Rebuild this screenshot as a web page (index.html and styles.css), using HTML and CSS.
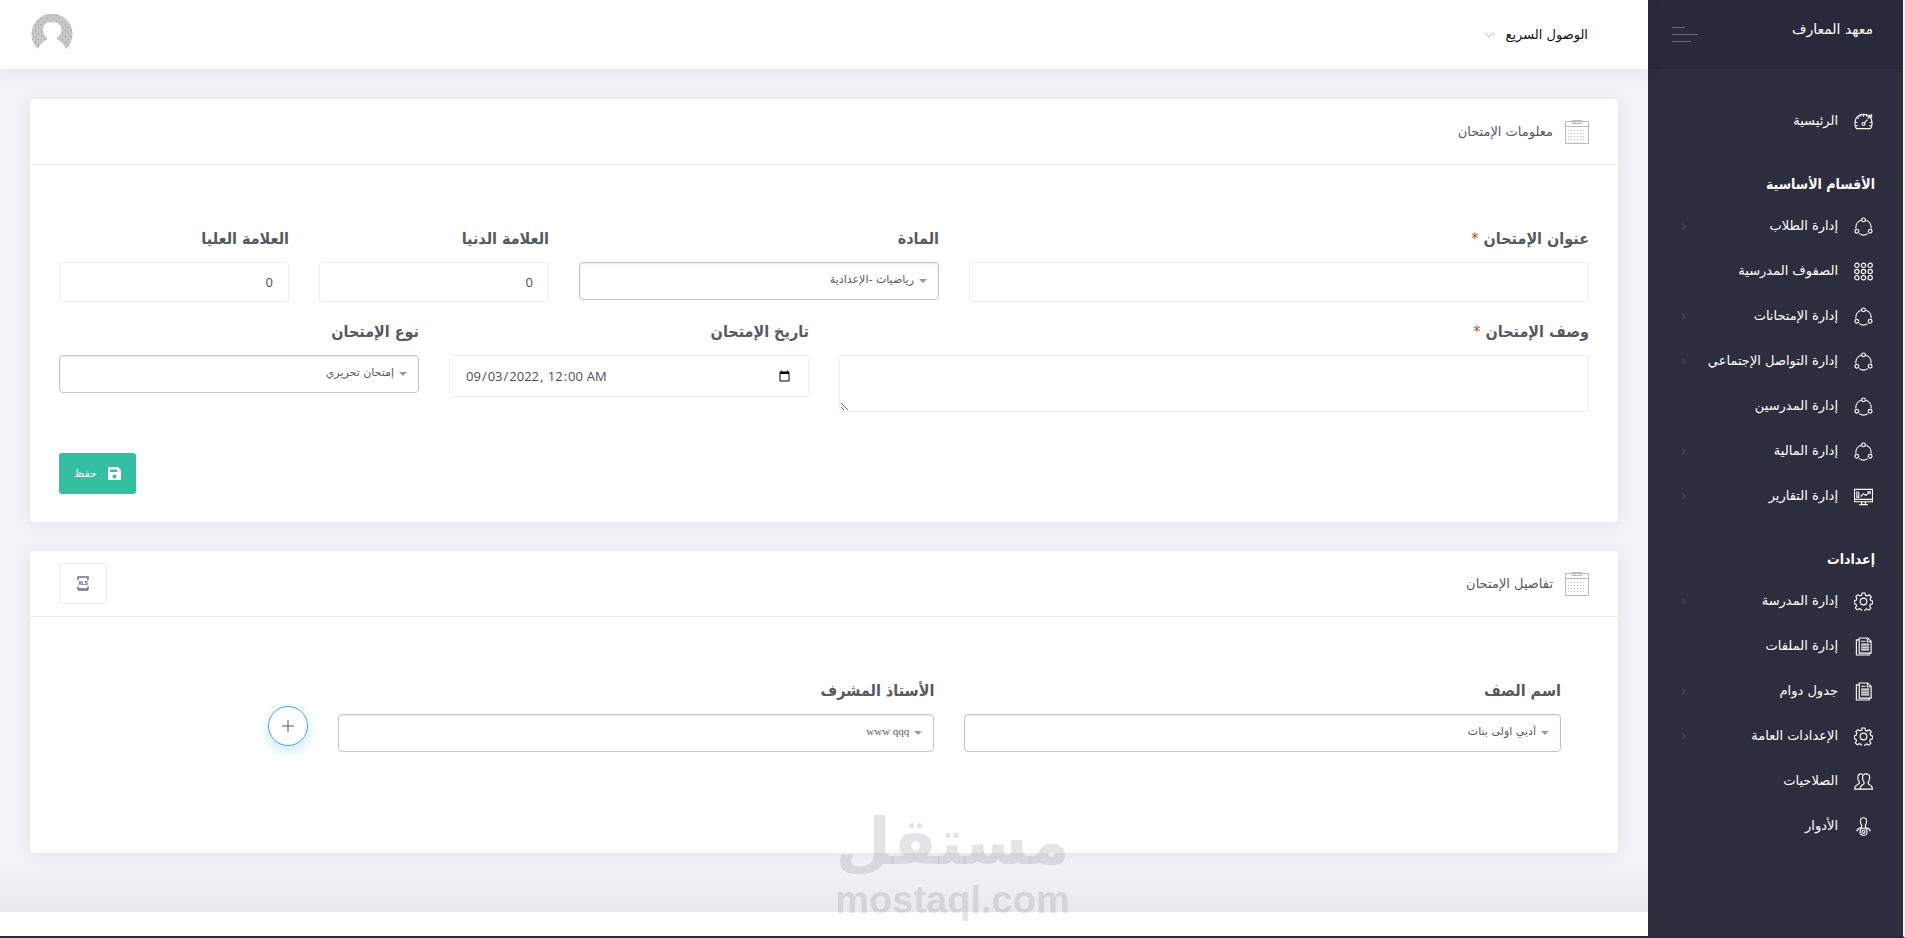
FILE: index.html
```
<!DOCTYPE html>
<html lang="ar" dir="rtl">
	<head>
		<meta charset="utf-8">
		<meta name="viewport" content="width=device-width, initial-scale=1.0">
		<title>معهد المعارف</title>
		<link rel="stylesheet" href="styles.css">
	</head>
	<body>
		<!-- 图标 -->
		<svg class="sprite" aria-hidden="true">
			<symbol id="i-dashboard" viewBox="0 0 20 20">
				<path d="M3 17.500h14c1-.5 2-3 2-6.500C19 6 15 2.500 10 2.500S1 6 1 11c0 3.500 1 6 2 6.500zM10 2.500v2.500M1 11h2.500M19 11h-2.500M3.500 5.500l1.500 1.500M6 3.500l.8 1.500M14 3.500l-.8 1.500M2 14.500h2M18 14.500h-2M14.500 7l4.500-4.500M15.500 3.500h3M18.500 3v3"/>
				<circle cx="10" cy="12.500" r="1.500"/><path d="M11 11.500l3-3.500"/>
			</symbol>
			<symbol id="i-share" viewBox="0 0 20 20">
				<circle cx="10" cy="3" r="2"/><circle cx="3" cy="15" r="2"/><circle cx="17" cy="15" r="2"/>
				<path d="M7.500 3.500A8 8 0 0 0 2 12M12.500 3.500A8 8 0 0 1 18 12M5.500 17.500a8 8 0 0 0 9 0"/>
			</symbol>
			<symbol id="i-grid" viewBox="0 0 20 20">
				<circle cx="3" cy="3.500" r="2.300"/><circle cx="10" cy="3.500" r="2.300"/><circle cx="17" cy="3.500" r="2.300"/>
				<circle cx="3" cy="10" r="2.300"/><circle cx="10" cy="10" r="2.300"/><circle cx="17" cy="10" r="2.300"/>
				<circle cx="3" cy="16.500" r="2.300"/><circle cx="10" cy="16.500" r="2.300"/><circle cx="17" cy="16.500" r="2.300"/>
			</symbol>
			<symbol id="i-report" viewBox="0 0 20 20">
				<path d="M.5 2.500h19v13H.5zM.5 13h19M8 15.500v3M12 15.500v3M5.500 18.500h9M3 4.500v6.500h2v-6M7 10l3-3 2.500 2 4-4M14 5h3v2.500"/>
			</symbol>
			<symbol id="i-gear" viewBox="0 0 20 20">
				<circle cx="10" cy="10" r="3.500"/>
				<path d="M8.500 1h3l.6 2.400 1.800.8 2.200-1.300 2.100 2.100-1.300 2.200.8 1.800 2 .6v2.800l-2.400.6-.8 1.800 1.300 2.200-2.100 2.100-2.200-1.300-1.800.8-.6 1.900h-3l-.6-2.200-1.800-.8-2.200 1.300-2.100-2.100 1.300-2.200-.8-1.800-1.600-.3V9.300l1.900-.6.8-1.800L2 4.800l2.100-2 2.200 1.300 1.800-.8z"/>
			</symbol>
			<symbol id="i-file" viewBox="0 0 20 20">
				<path d="M5.500 1h9l3.500 3.500V17H5.500zM14 1v4h4M5.500 3h-3v16H16v-2M7.500 7.500H16M7.500 9.500H16M7.500 11.500H16M7.500 13.500H16M7.500 4.500H12"/>
			</symbol>
			<symbol id="i-users" viewBox="0 0 20 20">
				<path d="M12.500 2c-2.500 0-3.500 1.500-3.500 4 0 2 .7 3.500 1.500 4.500v2c-1.500 1-4 1.500-4 5.500h13c0-4-3-4.500-4.500-5.500v-2c1-1 1.500-2.500 1.500-4.500 0-2.500-1.200-4-4-4z"/>
				<path d="M9 2.500C8.500 2.100 8 2 7.500 2 5 2 4 3.500 4 6c0 2 .5 3 1.500 4v2C4 13.500.5 13.500.5 18h6"/>
			</symbol>
			<symbol id="i-role" viewBox="0 0 20 20">
				<path d="M10 .8C7.500.8 6.800 2.200 6.800 4.500c0 1.800.4 3 1.200 4v2.500c-2 .8-5 1-5 4M10 .8c2.500 0 3.200 1.400 3.200 3.700 0 1.800-.4 3-1.200 4v2.500c2 .8 5 1 5 4"/>
				<circle cx="10" cy="15.500" r="3.700"/><circle cx="10" cy="15.500" r="1.500"/>
			</symbol>
			<symbol id="i-calendar" viewBox="0 0 24 24">
				<path d="M.5 1.500h23v22H.5zM.5 6.500h23"/>
				<path d="M7 .5h10v3H7zM10 .5v3M14 .5v3"/>
				<path d="M3 10.500h18M3 13.500h18M3 16.500h18M3 19.500h18" stroke-dasharray="1 2"/>
			</symbol>
		</svg>
		<div id="page">
			<aside class="sidebar">
				<div class="brand">
					<a class="brand__name" href="#">معهد المعارف</a>
					<button class="brand__toggle" type="button" aria-label="القائمة"><span></span><span></span><span></span></button>
				</div>
				<nav class="menu">
					<a class="menu__item" href="#"><svg class="icon"><use href="#i-dashboard"/></svg><span>الرئيسية</span></a>
					<h4 class="menu__section">الأقسام الأساسية</h4>
					<a class="menu__item menu__item--sub" href="#"><svg class="icon"><use href="#i-share"/></svg><span>إدارة الطلاب</span></a>
					<a class="menu__item" href="#"><svg class="icon"><use href="#i-grid"/></svg><span>الصفوف المدرسية</span></a>
					<a class="menu__item menu__item--sub" href="#"><svg class="icon"><use href="#i-share"/></svg><span>إدارة الإمتحانات</span></a>
					<a class="menu__item menu__item--sub" href="#"><svg class="icon"><use href="#i-share"/></svg><span>إدارة التواصل الإجتماعي</span></a>
					<a class="menu__item" href="#"><svg class="icon"><use href="#i-share"/></svg><span>إدارة المدرسين</span></a>
					<a class="menu__item menu__item--sub" href="#"><svg class="icon"><use href="#i-share"/></svg><span>إدارة المالية</span></a>
					<a class="menu__item menu__item--sub" href="#"><svg class="icon"><use href="#i-report"/></svg><span>إدارة التقارير</span></a>
					<h4 class="menu__section">إعدادات</h4>
					<a class="menu__item menu__item--sub" href="#"><svg class="icon"><use href="#i-gear"/></svg><span>إدارة المدرسة</span></a>
					<a class="menu__item" href="#"><svg class="icon"><use href="#i-file"/></svg><span>إدارة الملفات</span></a>
					<a class="menu__item menu__item--sub" href="#"><svg class="icon"><use href="#i-file"/></svg><span>جدول دوام</span></a>
					<a class="menu__item menu__item--sub" href="#"><svg class="icon"><use href="#i-gear"/></svg><span>الإعدادات العامة</span></a>
					<a class="menu__item" href="#"><svg class="icon"><use href="#i-users"/></svg><span>الصلاحيات</span></a>
					<a class="menu__item" href="#"><svg class="icon"><use href="#i-role"/></svg><span>الأدوار</span></a>
				</nav>
			</aside>
			<div class="wrapper">
				<header class="header">
					<a class="header__link" href="#">الوصول السريع
						<svg width="10" height="6" viewBox="0 0 10 6"><path d="M.5.5L5 5 9.500.5"/></svg>
					</a>
					<a class="header__avatar" href="#" aria-label="الحساب">
						<svg width="42" height="42" viewBox="0 0 42 42">
							<defs>
								<pattern id="dots" width="6" height="6" patternUnits="userSpaceOnUse">
									<rect width="6" height="6" fill="#c6c6c6"/><rect x="1" y="1" width="1" height="1" fill="#999"/><rect x="4" y="4" width="1" height="1" fill="#999"/>
								</pattern>
							</defs>
							<path fill="url(#dots)" d="M7 35A20.500 20.500 0 1 1 35 35C33 30 30 27 26 25.500 25 24.500 26 24 27 23 29 21 30.500 19 30.500 16 30.500 11 27 8 21 8s-9 3-9 8c0 3 1 5 3 7 1 1 2 1.500 1 2.500C12 27 9 30 7 35z"/>
						</svg>
					</a>
				</header>
				<main class="content">
					<form class="card">
						<div class="card__head">
							<svg class="card__icon"><use href="#i-calendar"/></svg>
							<h3 class="card__title">معلومات الإمتحان</h3>
						</div>
						<div class="card__body">
							<div class="row">
								<div class="field col-5">
									<label for="exam-title">عنوان الإمتحان <span class="required">*</span></label>
									<input class="control" id="exam-title" type="text">
								</div>
								<div class="field col-3">
									<label for="subject">المادة</label>
									<div class="select"><select id="subject"><option>رياضيات -الإعدادية</option></select></div>
								</div>
								<div class="field col-2">
									<label for="min-mark">العلامة الدنيا</label>
									<input class="control" id="min-mark" type="number" value="0">
								</div>
								<div class="field col-2">
									<label for="max-mark">العلامة العليا</label>
									<input class="control" id="max-mark" type="number" value="0">
								</div>
							</div>
							<div class="row">
								<div class="field col-6">
									<label for="exam-desc">وصف الإمتحان <span class="required">*</span></label>
									<textarea class="control" id="exam-desc" rows="2"></textarea>
								</div>
								<div class="field col-3">
									<label for="exam-date">تاريخ الإمتحان</label>
									<input class="control control--date" id="exam-date" type="datetime-local" dir="ltr" lang="en-US" value="2022-09-03T00:00">
								</div>
								<div class="field col-3">
									<label for="exam-type">نوع الإمتحان</label>
									<div class="select"><select id="exam-type"><option>إمتحان تحريري</option></select></div>
								</div>
							</div>
							<div class="actions">
								<button class="save-btn" type="submit">
									<svg width="13" height="13" viewBox="0 0 13 13"><path fill="#fff" fill-rule="evenodd" d="M1.500 0H10l3 3v8.500c0 1-.5 1.500-1.500 1.500h-10C.5 13 0 12.500 0 11.500v-10C0 .5.5 0 1.500 0zM2 2.500V5h7V2.500zM6.500 7.500a2 2 0 1 0 0 4 2 2 0 0 0 0-4z"/></svg>
									حفظ
								</button>
							</div>
						</div>
					</form>
					<form class="card">
						<div class="card__head">
							<svg class="card__icon"><use href="#i-calendar"/></svg>
							<h3 class="card__title">تفاصيل الإمتحان</h3>
							<button class="xls-btn" type="button" aria-label="Excel">
								<svg width="12" height="15" viewBox="0 0 12 15">
									<path d="M1 4V1h10v3M1 10.500V13h10v-2.500" fill="none" stroke="#6c7293" stroke-width="1.500"/>
									<path d="M1 14h10" stroke="#6c7293" stroke-width="1.500"/>
									<text x="6" y="9" text-anchor="middle">XLS</text>
								</svg>
							</button>
						</div>
						<div class="card__body card__body--inner">
							<div class="row">
								<div class="field col-5">
									<label for="class-name">اسم الصف</label>
									<div class="select"><select id="class-name"><option>أدبي اولى بنات</option></select></div>
								</div>
								<div class="field col-5">
									<label for="teacher">الأستاذ المشرف</label>
									<div class="select"><select class="latin" id="teacher"><option>www qqq</option></select></div>
								</div>
								<div class="col-2 add">
									<button class="add-btn" type="button" aria-label="إضافة">
										<svg width="12" height="12" viewBox="0 0 12 12"><path d="M6 0v12M0 6h12"/></svg>
									</button>
								</div>
							</div>
						</div>
					</form>
				</main>
				<footer class="footer"></footer>
			</div>
		</div>
		<div class="watermark" dir="ltr">
			<span class="watermark__ar" lang="ar">مستقل</span>
			<span class="watermark__en">mostaql.com</span>
		</div>
	</body>
</html>
```
FILE: styles.css
```
* {
	box-sizing: border-box;
}
body {
	margin: 0;
	background: #f2f3f8;
	color: #575962;
	font-family: "DejaVu Sans", sans-serif;
	font-size: 13px;
}
a {
	color: inherit;
	text-decoration: none;
}
button, input, select, textarea {
	font: inherit;
	color: inherit;
}
button {
	padding: 0;
	border: none;
	background: none;
	cursor: pointer;
}
.sprite {
	position: absolute;
	width: 0;
	height: 0;
}
#page {
	display: flex;
	min-height: 100vh;
	border-right: 2px solid #f0f0f4;
	border-bottom: 2px solid #282a3c;
}

/* sidebar */
.sidebar {
	width: 255px;
	flex-shrink: 0;
	background: #2c2e3e;
	color: #fff;
}
.brand {
	display: flex;
	justify-content: space-between;
	height: 69px;
	padding: 0 30px 0 24px;
	background: #282a3c;
}
.brand__name {
	font-size: 14px;
	line-height: 58px;
}
.brand__toggle {
	display: flex;
	flex-direction: column;
	align-items: flex-end;
	justify-content: center;
	gap: 6px;
}
.brand__toggle span {
	width: 26px;
	height: 1px;
	background: #6a6873;
}
.brand__toggle span:first-child {
	width: 13px;
}
.brand__toggle span:last-child {
	width: 19px;
}
.menu {
	padding-top: 30px;
}
.menu__item {
	display: flex;
	align-items: center;
	height: 45px;
	padding: 0 30px 0 32px;
	line-height: 20px;
}
.menu__item span {
	flex: 1;
	padding-bottom: 2px;
}
.menu__item--sub::after {
	content: "";
	width: 4px;
	height: 4px;
	border-top: 1px solid #4a4a5c;
	border-right: 1px solid #4a4a5c;
	transform: rotate(45deg);
}
.icon {
	width: 19px;
	height: 19px;
	margin-left: 16px;
	fill: none;
	stroke: #fff;
	stroke-width: 1.2;
}
.menu__section {
	margin: 0;
	padding: 20px 28px 0;
	font-family: "DejaVu Sans Condensed", "DejaVu Sans", sans-serif;
	font-size: 14px;
	line-height: 40px;
}

/* header */
.wrapper {
	display: flex;
	flex: 1;
	flex-direction: column;
	min-width: 0;
}
.header {
	position: relative;
	display: flex;
	align-items: center;
	justify-content: space-between;
	height: 69px;
	padding: 0 60px 0 31px;
	background: #fff;
	box-shadow: 0 1px 15px 1px rgba(69, 65, 78, 0.1);
}
.header__link {
	display: flex;
	align-items: center;
	gap: 11px;
	color: #111;
}
.header__link svg {
	fill: none;
	stroke: #b5c3cd;
}
.header__avatar svg {
	display: block;
}

/* cards */
.content {
	display: flex;
	flex: 1;
	flex-direction: column;
	gap: 29px;
	padding: 30px 30px 59px;
	background: linear-gradient(to top, #e9eaf0, #f2f3f8 50px);
}
.card {
	border-radius: 4px;
	background: #fff;
	box-shadow: 0 1px 15px 1px rgba(69, 65, 78, 0.08);
}
.card__head {
	display: flex;
	align-items: center;
	height: 66px;
	padding: 0 29px;
	border-bottom: 1px solid #ebedf2;
}
.card__icon {
	width: 24px;
	height: 24px;
	margin-left: 12px;
	fill: none;
	stroke: #b8bcbf;
}
.card__title {
	flex: 1;
	margin: 0;
	font-size: 13px;
	font-weight: normal;
}
.card__body {
	padding: 59px 29px 28px;
}
.card__body--inner {
	padding: 59px 57px 84px;
}

/* form */
.row {
	display: grid;
	grid-template-columns: repeat(12, minmax(0, 1fr));
	column-gap: 30px;
	min-height: 93px;
}
.col-2 {grid-column: span 2}
.col-3 {grid-column: span 3}
.col-5 {grid-column: span 5}
.col-6 {grid-column: span 6}
.field label {
	display: block;
	height: 38px;
	font-family: "DejaVu Sans Condensed", "DejaVu Sans", sans-serif;
	font-size: 16px;
	font-weight: bold;
	line-height: 30px;
}
.required {
	color: #b5532a;
	font-weight: normal;
}
.control {
	display: block;
	width: 100%;
	height: 40px;
	padding: 0 15px;
	border: 1px solid #ebedf2;
	border-radius: 3px;
	outline: none;
	background: #fff;
	color: #495057;
	font-family: "Open Sans", "DejaVu Sans", sans-serif;
	font-size: 13px;
}
.control--date {
	height: 42px;
}
textarea.control {
	height: 57px;
	resize: both;
}
.select {
	position: relative;
}
.select::after {
	content: "";
	position: absolute;
	top: 17px;
	right: 12px;
	border: 4px solid transparent;
	border-top-color: #999;
	pointer-events: none;
}
.select select {
	width: 100%;
	height: 38px;
	padding: 0 24px 4px 12px;
	border: 1px solid #c4c4c4;
	border-radius: 4px;
	outline: none;
	appearance: none;
	background: #fff;
	box-shadow: 0 1px 1px rgba(0, 0, 0, 0.08) inset;
	font-size: 11px;
}
.select .latin {
	font-family: "Liberation Serif", serif;
}
.actions {
	display: flex;
	justify-content: flex-end;
	padding-top: 41px;
}
.save-btn {
	display: flex;
	align-items: center;
	gap: 11px;
	height: 41px;
	padding: 0 15px;
	border-radius: 3px;
	background: #34bfa3;
	color: #fff;
	font-size: 11px;
}
.xls-btn {
	display: flex;
	align-items: center;
	justify-content: center;
	width: 48px;
	height: 41px;
	border: 1px solid #ebedf2;
	border-radius: 3px;
}
.xls-btn text {
	fill: #4b5270;
	font: bold 5px "Liberation Sans", sans-serif;
}
.add {
	padding-top: 30px;
}
.add-btn {
	display: flex;
	align-items: center;
	justify-content: center;
	width: 40px;
	height: 40px;
	border: 1px solid #36a3f7;
	border-radius: 50%;
	box-shadow: 0 5px 10px 2px rgba(54, 163, 247, 0.19);
}
.add-btn path {
	stroke: #555;
}

.footer {
	height: 24px;
	background: #fff;
}

/* watermark over the page */
.watermark {
	position: fixed;
	bottom: 16px;
	left: 50%;
	display: flex;
	flex-direction: column;
	align-items: center;
	color: rgba(120, 122, 130, 0.2);
	font-weight: bold;
	transform: translateX(-50%);
	pointer-events: none;
}
.watermark__ar {
	font-family: "DejaVu Sans", sans-serif;
	font-size: 64px;
}
.watermark__en {
	font-family: "Liberation Sans", sans-serif;
	font-size: 38px;
}
```
